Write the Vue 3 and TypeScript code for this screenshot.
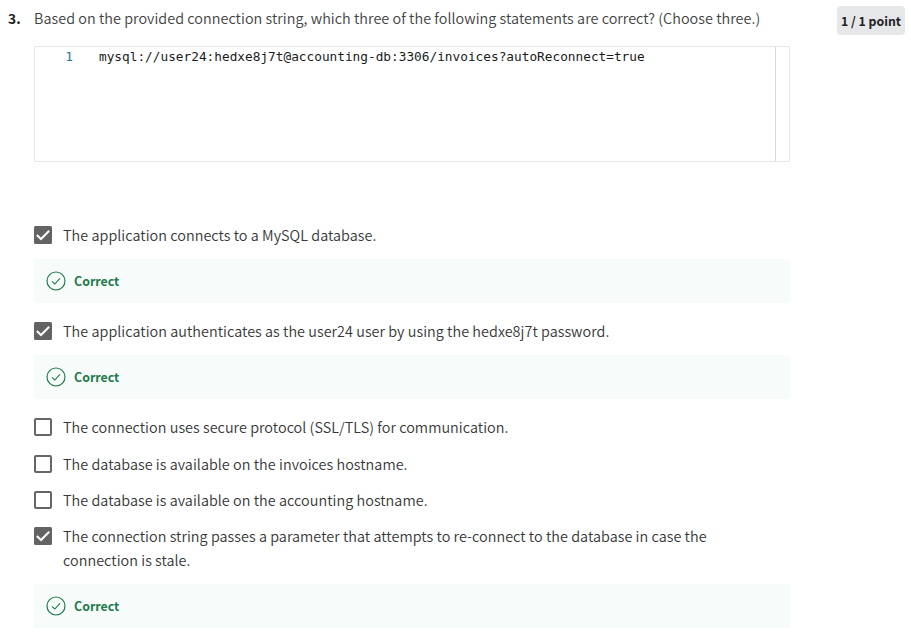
<script setup lang="ts">
interface Option {
  id: string
  text: string
  checked: boolean
}

const connectionString = 'mysql://user24:hedxe8j7t@accounting-db:3306/invoices?autoReconnect=true'

const options: Option[] = [
  { id: 'mysql', text: 'The application connects to a MySQL database.', checked: true },
  { id: 'auth', text: 'The application authenticates as the user24 user by using the hedxe8j7t password.', checked: true },
  { id: 'tls', text: 'The connection uses secure protocol (SSL/TLS) for communication.', checked: false },
  { id: 'invoices', text: 'The database is available on the invoices hostname.', checked: false },
  { id: 'accounting', text: 'The database is available on the accounting hostname.', checked: false },
  { id: 'reconnect', text: 'The connection string passes a parameter that attempts to re-connect to the database in case the connection is stale.', checked: true },
]
</script>

<template>
  <main class="question">
    <span class="number">3.</span>
    <section class="content">
      <h1 class="prompt">Based on the provided connection string, which three of the following statements are correct? (Choose three.)</h1>
      <div class="editor">
        <span class="line-number">1</span>
        <code class="code">{{ connectionString }}</code>
        <div class="ruler"></div>
      </div>
      <div class="options">
        <div v-for="option in options" :key="option.id" class="option" :class="option.id">
          <div class="label">
            <svg class="checkbox" viewBox="0 0 18 18">
              <template v-if="option.checked">
                <rect width="18" height="18" rx="1.5" fill="#636363" />
                <path d="M2.8 9 7 13 15.2 4.8" fill="none" stroke="#fff" stroke-width="2" />
              </template>
              <rect v-else x="1" y="1" width="16" height="16" rx="1" fill="#fff" stroke="#666" stroke-width="2" />
            </svg>
            <span class="text">{{ option.text }}</span>
          </div>
          <div v-if="option.checked" class="feedback">
            <svg class="tick" viewBox="0 0 20 20" fill="none" stroke="#1d7c50">
              <circle cx="10" cy="10" r="9" stroke-width="1.2" />
              <path d="M6 10.4 8.8 13 14 7.3" stroke-width="1.1" />
            </svg>
            <strong class="verdict">Correct</strong>
          </div>
        </div>
      </div>
    </section>
    <aside class="points">1 / 1 point</aside>
  </main>
</template>

<style>
body {
  background: #fff;
}
</style>

<style scoped>
.question {
  display: flex;
  box-sizing: border-box;
  width: 911px;
  height: 641px;
  padding: 6px 6px 0 8px;
  font-family: "Noto Sans CJK SC", "Open Sans", sans-serif;
  font-size: 14.4px;
  line-height: 24px;
  color: #373737;
  overflow: hidden;
}
.number {
  width: 26px;
  font-size: 13.8px;
  font-weight: 700;
  color: #1f1f1f;
}
.content {
  width: 756px;
}
.prompt {
  margin: 0;
  font-size: 14.4px;
  font-weight: 350;
  letter-spacing: 0.038px;
  color: #424242;
  white-space: nowrap;
}
.editor {
  display: flex;
  box-sizing: border-box;
  height: 116px;
  margin-top: 16px;
  border: 1px solid #e8e8e8;
  font-family: "DejaVu Sans Mono", "Liberation Mono", monospace;
  font-size: 12.78px;
  line-height: 19px;
  color: #1a1a1a;
}
.line-number {
  width: 38px;
  text-align: right;
  color: #237893;
}
.code {
  flex: 1;
  padding-left: 26px;
  font-family: inherit;
  white-space: nowrap;
}
.ruler {
  width: 13px;
  border-left: 1px solid #d8d8d8;
}
.options {
  margin-top: 61px;
}
.option {
  margin-bottom: 12px;
}
.option.mysql,
.option.auth {
  margin-bottom: 16px;
}
.option.tls {
  margin-bottom: 13px;
}
.label {
  display: flex;
  gap: 11px;
  font-weight: 350;
  letter-spacing: 0.036px;
}
.checkbox {
  flex: none;
  width: 18px;
  height: 18px;
  margin-top: 3px;
}
.text {
  width: 660px;
}
.feedback {
  display: flex;
  align-items: center;
  height: 44px;
  margin-top: 12px;
  padding-left: 12px;
  background: #f7fbf9;
}
.tick {
  width: 20px;
  height: 20px;
  margin-right: 8px;
}
.verdict {
  font-size: 12.4px;
  color: #1d7c50;
}
.points {
  box-sizing: border-box;
  width: 68px;
  height: 29px;
  margin-left: auto;
  border-radius: 4px;
  background: #e5e7e8;
  font-size: 12.3px;
  font-weight: 700;
  line-height: 30px;
  color: #1f1f1f;
  text-align: center;
  white-space: nowrap;
}
</style>
